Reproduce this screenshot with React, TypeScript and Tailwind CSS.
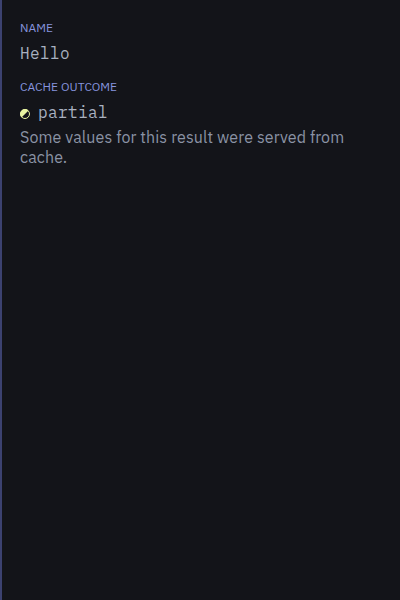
export default function App() {
  return (
    <main className="h-[600px] w-[400px] overflow-hidden border-l-2 border-[#3c4270] bg-[#131419] pl-[18px] pt-5 font-['IBM_Plex_Sans',Inter,sans-serif]">
      <dl>
        <dt className="h-4 whitespace-nowrap text-[12px] leading-4 tracking-[0.05px] text-[#8794df]">NAME</dt>
        <dd className="mt-[7px] h-5 font-['IBM_Plex_Mono','Liberation_Mono',monospace] text-[16px] leading-5 tracking-[0.4px] text-[#a9b1c0]">Hello</dd>
        <dt className="mt-4 h-4 whitespace-nowrap text-[12px] leading-4 tracking-[0.05px] text-[#8794df]">CACHE OUTCOME</dt>
        <dd>
          <div className="mt-[7px] flex h-5 items-center gap-2">
            <svg className="mt-1 size-[10px]" viewBox="0 0 10 10" aria-hidden="true">
              <circle cx="5" cy="5" r="4.5" fill="none" stroke="#e9f5a1" />
              <path d="M8.5 1.5A4.95 4.95 0 0 0 1.5 8.5Z" fill="#e9f5a1" />
            </svg>
            <span className="font-['IBM_Plex_Mono','Liberation_Mono',monospace] text-[16px] leading-5 tracking-[0.4px] text-[#a9b1c0]">partial</span>
          </div>
          <p className="mt-[5px] text-[16px] leading-5 tracking-[0.11px] text-[#8b93a5]">Some values for this result were served from<br />cache.</p>
        </dd>
      </dl>
    </main>
  );
}
